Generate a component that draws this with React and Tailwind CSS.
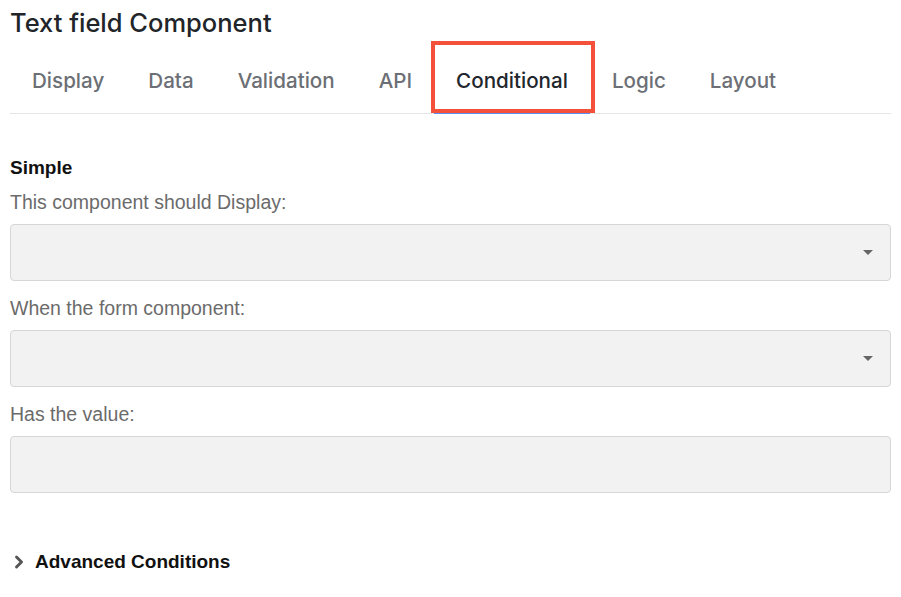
import { ChevronRight } from "lucide-react";

const tabs = ["Display", "Data", "Validation", "API", "Conditional", "Logic", "Layout"];

function SelectBox({ caret = true }) {
  return (
    <div className="relative h-[57px] w-full rounded-[4px] border border-[#d6d6d6] bg-[#f2f2f2]">
      {caret && (
        <span className="absolute right-[17px] top-[25px] h-0 w-0 border-x-[5px] border-t-[5px] border-x-transparent border-t-[#666]" />
      )}
    </div>
  );
}

function Field({ label, caret, className = "" }) {
  return (
    <div className={className}>
      <label className="mb-[10px] block text-[19.5px] leading-6 text-[#6b6b6b]">{label}</label>
      <SelectBox caret={caret} />
    </div>
  );
}

export default function App() {
  return (
    <div className="min-h-[597px] bg-white px-[10px] font-['Liberation_Sans',Arial,sans-serif]">
      <h1 className="pt-[7px] font-['Inter',sans-serif] text-[25.5px] font-medium leading-8 text-[#212529]">
        Text field Component
      </h1>

      {/* tab strip */}
      <ul className="mt-[11px] flex border-b border-[#e6e6e6] font-['Inter',sans-serif]">
        {tabs.map((t) => {
          const active = t === "Conditional";
          return (
            <li
              key={t}
              className={`relative px-[22px] py-[16px] text-[20.6px] font-medium leading-[30px] ${
                active ? "-mb-px border-b-2 border-[#5b8ff0] text-[#22262d]" : "text-[#6c6f75]"
              }`}
            >
              {t}
              {active && (
                <span className="pointer-events-none absolute -left-[3px] -right-[5px] -top-[9px] bottom-[-1px] border-4 border-[#f4513a]" />
              )}
            </li>
          );
        })}
      </ul>

      <div className="pt-[42px]">
        <h2 className="text-[19px] font-bold leading-6 text-[#111]">Simple</h2>
        <Field className="mt-[10px]" label="This component should Display:" />
        <Field className="mt-[15px]" label="When the form component:" />
        <Field className="mt-[15px]" label="Has the value:" caret={false} />

        <div className="mt-[57px] flex items-center gap-[6px]">
          <ChevronRight size={20} strokeWidth={3.5} className="-ml-[1px] text-[#555]" />
          <span className="text-[19px] font-bold leading-6 text-[#111]">Advanced Conditions</span>
        </div>
      </div>
    </div>
  );
}
